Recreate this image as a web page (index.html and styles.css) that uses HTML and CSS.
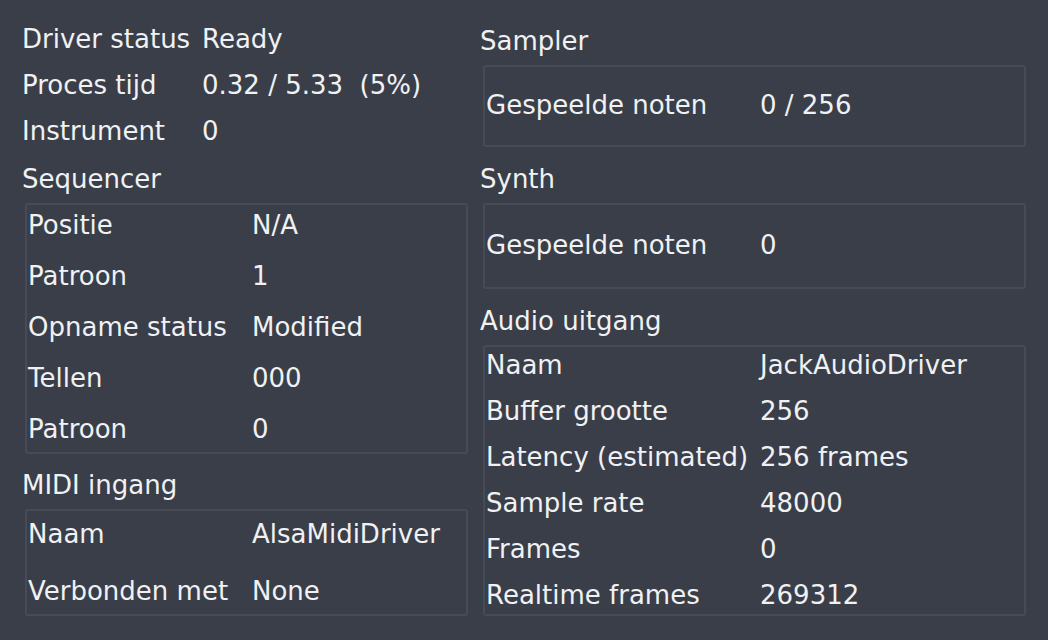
FILE: index.html
```html
<!DOCTYPE html>
<html>
<head>
<meta charset="utf-8">
<link rel="stylesheet" href="styles.css">
</head>
<body>
<div class="page">
  <div class="col col-left">
    <div class="info">
      <div class="info-label">Driver status</div><div class="info-value">Ready</div>
      <div class="info-label">Proces tijd</div><div class="info-value">0.32 / 5.33&nbsp; (5%)</div>
      <div class="info-label">Instrument</div><div class="info-value">0</div>
    </div>

    <div class="title title-seq">Sequencer</div>
    <div class="box box-left box-seq">
      <div class="kv">Positie</div><div class="kv">N/A</div>
      <div class="kv">Patroon</div><div class="kv">1</div>
      <div class="kv">Opname status</div><div class="kv">Modified</div>
      <div class="kv">Tellen</div><div class="kv">000</div>
      <div class="kv">Patroon</div><div class="kv">0</div>
    </div>

    <div class="title title-midi">MIDI ingang</div>
    <div class="box box-left box-midi">
      <div class="kv">Naam</div><div class="kv">AlsaMidiDriver</div>
      <div class="kv">Verbonden met</div><div class="kv">None</div>
    </div>
  </div>

  <div class="col col-right">
    <div class="title title-sampler">Sampler</div>
    <div class="box box-right box-sampler">
      <div class="kv">Gespeelde noten</div><div class="kv">0 / 256</div>
    </div>

    <div class="title title-synth">Synth</div>
    <div class="box box-right box-synth">
      <div class="kv">Gespeelde noten</div><div class="kv">0</div>
    </div>

    <div class="title title-audio">Audio uitgang</div>
    <div class="box box-right box-audio">
      <div class="kv">Naam</div><div class="kv">JackAudioDriver</div>
      <div class="kv">Buffer grootte</div><div class="kv">256</div>
      <div class="kv">Latency (estimated)</div><div class="kv">256 frames</div>
      <div class="kv">Sample rate</div><div class="kv">48000</div>
      <div class="kv">Frames</div><div class="kv">0</div>
      <div class="kv">Realtime frames</div><div class="kv">269312</div>
    </div>
  </div>
</div>
</body>
</html>
```

FILE: styles.css
```css
html, body {
  margin: 0;
  padding: 0;
  background: #3a3e49;
}

body {
  width: 1048px;
  height: 640px;
  overflow: hidden;
  font-family: "DejaVu Sans", "Liberation Sans", sans-serif;
  font-size: 26px;
  color: #f0f1f3;
}

.page {
  display: flex;
  gap: 12px;
  padding-left: 22px;
}

.col {
  display: flex;
  flex-direction: column;
}

.col-left {
  width: 446px;
  padding-top: 16px;
}

.col-right {
  width: 546px;
}

.info {
  display: grid;
  grid-template-columns: 180px 1fr;
  grid-auto-rows: 46px;
  line-height: 46px;
  white-space: nowrap;
}

.title {
  line-height: 36px;
  margin-bottom: 6px;
  white-space: nowrap;
}

.title-seq { margin-top: 7px; }
.title-midi { margin-top: 13px; }
.title-sampler { margin-top: 23px; }
.title-synth { margin-top: 14px; }
.title-audio { margin-top: 14px; }

.box {
  display: grid;
  grid-auto-rows: 36px;
  line-height: 36px;
  margin-left: 3px;
  border: 2px solid #474b57;
  border-radius: 3px;
  padding-left: 1px;
  white-space: nowrap;
}

.box-left {
  grid-template-columns: 224px 1fr;
}

.box-right {
  grid-template-columns: 274px 1fr;
}

.box-seq {
  row-gap: 15px;
  padding-top: 2px;
  padding-bottom: 5px;
}

.box-midi {
  row-gap: 21px;
  padding-top: 5px;
  padding-bottom: 5px;
}

.box-sampler {
  padding-top: 20px;
  padding-bottom: 22px;
}

.box-synth {
  padding-top: 22px;
  padding-bottom: 24px;
}

.box-audio {
  row-gap: 10px;
  padding-top: 0;
  padding-bottom: 1px;
}
```
